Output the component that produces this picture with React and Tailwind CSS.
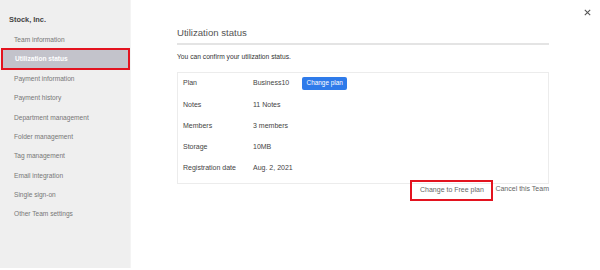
import React from 'react';

const menu = [
  'Team information',
  'Utilization status',
  'Payment information',
  'Payment history',
  'Department management',
  'Folder management',
  'Tag management',
  'Email integration',
  'Single sign-on',
  'Other Team settings',
];

const rows = [
  ['Plan', 'Business10', true],
  ['Notes', '11 Notes'],
  ['Members', '3 members'],
  ['Storage', '10MB'],
  ['Registration date', 'Aug. 2, 2021'],
];

export default function App() {
  return (
    <div
      className="relative flex w-[600px] h-[270px] bg-white overflow-hidden"
      style={{ fontFamily: '"Liberation Sans", Arial, sans-serif' }}
    >
      {/* sidebar */}
      <aside className="w-[131px] h-[268px] bg-[#efefef] border-r border-[#f4f4f4] pt-[14px]">
        <div className="pl-[9px] text-[7.4px] font-bold text-[#444] h-[11px] leading-[11px]">Stock, Inc.</div>
        <ul className="mt-[5px]">
          {menu.map((item) =>
            item === 'Utilization status' ? (
              <li
                key={item}
                className="h-[22px] my-[-1px] ml-[1px] w-[129px] flex items-center pl-[12px] bg-[#c3c3cb] border-2 border-[#e3131f] text-white font-bold text-[6.6px]"
              >
                {item}
              </li>
            ) : (
              <li key={item} className="h-[19.35px] flex items-center pl-[14px] text-[6.6px] text-[#777]">
                {item}
              </li>
            )
          )}
        </ul>
      </aside>

      {/* content */}
      <main className="flex-1 pl-[46px] pr-[51px] pt-[27px]">
        <h2 className="text-[9.6px] text-[#555] leading-[12px] pb-[4px] border-b-2 border-[#e4e4e4]">
          Utilization status
        </h2>
        <p className="mt-[7px] text-[6.7px] text-[#333] leading-[9px]">You can confirm your utilization status.</p>

        <div className="mt-[11px] border border-[#ececec] pb-[4px]">
          {rows.map(([label, value, btn]) => (
            <div key={label} className="h-[21.2px] flex items-center pl-[5px] text-[7px] text-[#444]">
              <span className="w-[70px]">{label}</span>
              <span>{value}</span>
              {btn && (
                <button className="ml-[13px] h-[13px] w-[45px] rounded-[2px] bg-[#2f7bea] text-white text-[6.4px] leading-none">
                  Change plan
                </button>
              )}
            </div>
          ))}
        </div>

        <div className="mt-[-4px] flex justify-end items-center text-[7px] text-[#666]">
          <span className="h-[21px] w-[83px] border-2 border-[#e3131f] flex items-center justify-center">
            Change to Free plan
          </span>
          <span className="ml-[2px] mt-[-2px]">Cancel this Team</span>
        </div>
      </main>

      <svg className="absolute left-[584px] top-[9px]" width="7" height="7" viewBox="0 0 7 7">
        <path d="M0.8 0.8 L6.2 6.2 M6.2 0.8 L0.8 6.2" stroke="#555" strokeWidth="1.1" />
      </svg>
    </div>
  );
}
